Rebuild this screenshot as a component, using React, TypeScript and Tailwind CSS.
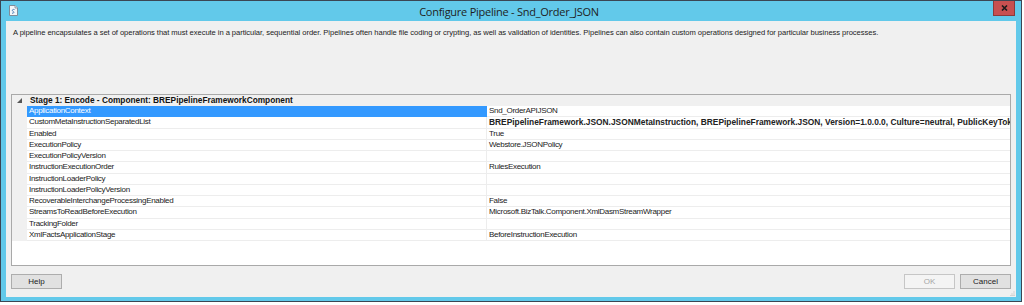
import React from "react";

const rows: { name: string; value: string; bold?: boolean; selected?: boolean }[] = [
  { name: "ApplicationContext", value: "Snd_OrderAPIJSON", selected: true },
  {
    name: "CustomMetaInstructionSeparatedList",
    value:
      "BREPipelineFramework.JSON.JSONMetaInstruction, BREPipelineFramework.JSON, Version=1.0.0.0, Culture=neutral, PublicKeyToken=null",
    bold: true,
  },
  { name: "Enabled", value: "True" },
  { name: "ExecutionPolicy", value: "Webstore.JSONPolicy" },
  { name: "ExecutionPolicyVersion", value: "" },
  { name: "InstructionExecutionOrder", value: "RulesExecution" },
  { name: "InstructionLoaderPolicy", value: "" },
  { name: "InstructionLoaderPolicyVersion", value: "" },
  { name: "RecoverableInterchangeProcessingEnabled", value: "False" },
  { name: "StreamsToReadBeforeExecution", value: "Microsoft.BizTalk.Component.XmlDasmStreamWrapper" },
  { name: "TrackingFolder", value: "" },
  { name: "XmlFactsApplicationStage", value: "BeforeInstructionExecution" },
];

const sans = "font-['Liberation_Sans',Arial,sans-serif]";

export default function App() {
  return (
    <div className={`w-[1024px] h-[305px] bg-white ${sans}`}>
      <div className="w-[1022px] h-[302px] border border-[#3b4654] bg-[#62c9ea] flex flex-col">
        {/* Title bar */}
        <div className="relative h-[20px] flex items-center justify-center shrink-0">
          <svg className="absolute left-[8px] top-[4px]" width="9" height="11" viewBox="0 0 9 11">
            <path d="M0.5 0.5 H6 L8.5 3 V10.5 H0.5 Z" fill="#f4f6f8" stroke="#7f8c99" />
            <path d="M6 0.5 V3 H8.5" fill="#dfe4ea" stroke="#7f8c99" strokeWidth="0.8" />
            <path d="M5.5 4.5 C3.5 4 2.5 5.5 4 6.3 C5.5 7 5 8.6 3 8.2" fill="none" stroke="#4a7fb8" strokeWidth="1" />
          </svg>
          <span className="font-['Open_Sans',sans-serif] text-[11px] text-[#1e1e1e] tracking-[-0.25px] leading-none mt-[1px] mr-[4px]">
            Configure Pipeline - Snd_Order_JSON
          </span>
          <div className="absolute right-[6px] top-0 w-[22px] h-[15px] bg-[#c75050] border border-t-0 border-[#8c3a3a] flex items-center justify-center">
            <svg width="7" height="6" viewBox="0 0 7 6">
              <path d="M1 0.5 L6 5.5 M6 0.5 L1 5.5" stroke="#1b1b1b" strokeWidth="1.6" />
            </svg>
          </div>
        </div>

        {/* Client area */}
        <div className="flex-1 mx-[5px] mb-[4px] bg-[#f0f0f0] flex flex-col px-[5px]">
          <div className="h-[73px] shrink-0 pt-[7px] pl-[2px]">
            <p className="text-[7.6px] leading-[10px] text-[#222] whitespace-nowrap tracking-[-0.06px]">
              A pipeline encapsulates a set of operations that must execute in a particular, sequential order. Pipelines often handle file coding or crypting, as well as validation of identities. Pipelines can also contain custom operations designed for particular business processes.
            </p>
          </div>

          {/* Property grid */}
          <div className="h-[172px] shrink-0 border border-[#a9a9a9] bg-white overflow-hidden flex flex-col">
            <div className="h-[11px] shrink-0 bg-[#f0f0f0] flex items-center">
              <div className="w-[15px] h-full flex items-center justify-center">
                <svg width="5" height="5" viewBox="0 0 5 5">
                  <path d="M5 0 V5 H0 Z" fill="#555" />
                </svg>
              </div>
              <span className="pl-[3px] text-[8.3px] font-bold text-[#111] tracking-[0px] leading-none whitespace-nowrap">
                Stage 1: Encode - Component: BREPipelineFrameworkComponent
              </span>
            </div>
            {rows.map((r) => (
              <div key={r.name} className="h-[11.25px] shrink-0 flex">
                <div className="w-[15px] shrink-0 bg-[#f0f0f0]" />
                <div
                  className={`w-[460px] shrink-0 flex items-center pl-[2px] border-r border-b ${
                    r.selected ? "bg-[#3399ff] text-white border-[#3399ff]" : "text-[#222] border-[#ededed]"
                  } text-[8px] tracking-[-0.3px] leading-none whitespace-nowrap`}
                >
                  {r.name}
                </div>
                <div
                  className={`flex-1 min-w-0 overflow-hidden flex items-center pl-[2px] border-b border-[#ededed] leading-none whitespace-nowrap text-[#222] ${
                    r.bold ? "font-bold text-[8.4px] tracking-[0px] text-[#111]" : "text-[8px] tracking-[-0.3px]"
                  }`}
                >
                  {r.value}
                </div>
              </div>
            ))}
          </div>

          {/* Buttons */}
          <div className="flex items-start pt-[8px] relative flex-1">
            <button className="w-[51px] h-[15px] bg-[#e1e1e1] border border-[#adadad] text-[8px] text-[#222] leading-none flex items-center justify-center">
              Help
            </button>
            <div className="flex-1" />
            <button className="w-[51px] h-[15px] bg-[#f4f4f4] border border-[#c6c6c6] text-[8px] text-[#a6a6a6] leading-none flex items-center justify-center">
              OK
            </button>
            <button className="ml-[5px] w-[51px] h-[15px] bg-[#e1e1e1] border border-[#adadad] text-[8px] text-[#222] leading-none flex items-center justify-center">
              Cancel
            </button>
            <svg className="absolute right-[-4px] bottom-[1px]" width="5" height="5" viewBox="0 0 5 5">
              <rect x="3.5" y="0.5" width="1" height="1" fill="#b8b8b8" />
              <rect x="1.5" y="2.5" width="1" height="1" fill="#b8b8b8" />
              <rect x="3.5" y="2.5" width="1" height="1" fill="#b8b8b8" />
              <rect x="-0.5" y="4" width="1" height="1" fill="#b8b8b8" />
              <rect x="1.5" y="4" width="1" height="1" fill="#b8b8b8" />
              <rect x="3.5" y="4" width="1" height="1" fill="#b8b8b8" />
            </svg>
          </div>
        </div>
      </div>
    </div>
  );
}
